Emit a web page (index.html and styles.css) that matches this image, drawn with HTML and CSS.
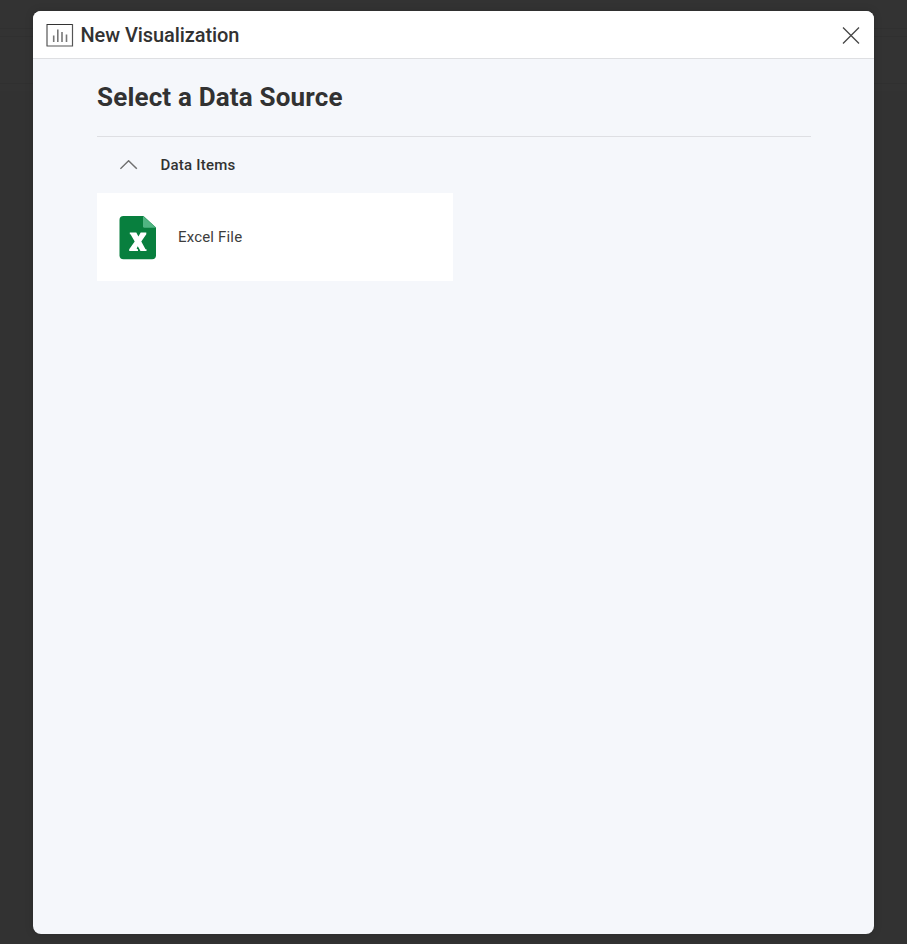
FILE: index.html
```html
<!DOCTYPE html>
<html lang="en">
<head>
<meta charset="utf-8">
<title>New Visualization</title>
<link rel="stylesheet" href="styles.css">
</head>
<body>
<main class="dialog">
  <header class="dialog-header">
    <svg class="chart-icon" width="28" height="24" viewBox="0 0 28 24" fill="none">
      <path d="M.5 .5H27" stroke="#333"/>
      <path d="M1 1V22M26.500 0V22.500M.5 22H27" stroke="#555" stroke-width="1.2"/>
      <path d="M7.700 11.500v6.500M11.800 5.500v12.500M16 8v10M20.500 10.500v7.500" stroke="#777" stroke-width="1.6"/>
    </svg>
    <h1 class="dialog-title">New Visualization</h1>
    <svg class="close-icon" width="18" height="18" viewBox="0 0 18 18" fill="none" stroke="#454545" stroke-width="1.3"><path d="M1 .5L17 16.500M17 .5L1 16.500"/></svg>
  </header>
  <section class="content">
    <h2 class="heading">Select a Data Source</h2>
    <div class="group">
      <svg class="chevron" width="18" height="10" viewBox="0 0 18 10" fill="none" stroke="#707070" stroke-width="1.5"><path d="M.4 8.800L8.600 .8L16.800 8.800"/></svg>
      <h3 class="group-title">Data Items</h3>
    </div>
    <div class="source-card">
      <svg class="excel-icon" width="38" height="44" viewBox="0 0 38 44">
        <path d="M4.500 0H24.500L37 11.500V39.200Q37 43.200 33 43.200H4.500Q.5 43.200 .5 39.200V4Q.5 0 4.500 0Z" fill="#087f3e"/>
        <path d="M24 0L37 11.800H25.500Q24 11.800 24 10.300Z" fill="#50b582"/>
        <path d="M10.800 16.500H17.300L19.400 20.500L21.700 16.500H27.300V18.200L22.300 25.500L26.500 33.300H27.500V35H21.500L18.800 30.300L17.600 32.500L19 33.500V35H10.200V33.300L15.700 25.500L11.500 18.300H10.800Z" fill="#fff"/>
      </svg>
      <span class="source-name">Excel File</span>
    </div>
  </section>
</main>
</body>
</html>
```

FILE: styles.css
```css
* { box-sizing: border-box; }
body {
  margin: 0;
  height: 944px;
  padding: 11px 33px 10px;
  overflow: hidden;
  background: linear-gradient(#333 0 28px, #303030 28px 29px, #333 29px 36px, #303030 36px 37px, #333 37px 83px, #303030 83px 84px, #333 84px 91px, #323232 91px);
  color: #323232;
  font-family: Roboto, sans-serif;
}
h1, h2, h3 { margin: 0; }
.dialog {
  height: 923px;
  overflow: hidden;
  border-radius: 8px;
  background: #f5f7fb;
  box-shadow: 0 0 9px rgba(0, 0, 0, .15);
}
.dialog-header {
  height: 48px;
  display: flex;
  align-items: center;
  padding: 0 14px 0 13px;
  background: #fff;
  border-bottom: 1px solid #dedfe2;
}
.chart-icon { margin-top: 3px; }
.dialog-title {
  margin-left: 6.500px;
  font-size: 20px;
  line-height: 24px;
  font-weight: 500;
  letter-spacing: -.08px;
}
.close-icon { margin-left: auto; margin-top: 2px; }
.content { padding: 0 63px 0 64px; }
.heading {
  height: 78px;
  padding-top: 22px;
  border-bottom: 1px solid #dedfe3;
  font-size: 26px;
  line-height: 32px;
  font-weight: 700;
  letter-spacing: .17px;
}
.group { height: 56px; display: flex; align-items: center; padding-left: 23px; }
.group-title {
  margin-left: 22.500px;
  font-size: 15px;
  line-height: 20px;
  font-weight: 500;
  letter-spacing: .23px;
}
.source-card {
  width: 356px;
  height: 88px;
  display: flex;
  align-items: center;
  padding-left: 22px;
  background: #fff;
}
.excel-icon { margin-top: 1px; }
.source-name { margin-left: 21px; font-size: 15px; line-height: 20px; letter-spacing: .18px; color: #3d3d3d; }
```
